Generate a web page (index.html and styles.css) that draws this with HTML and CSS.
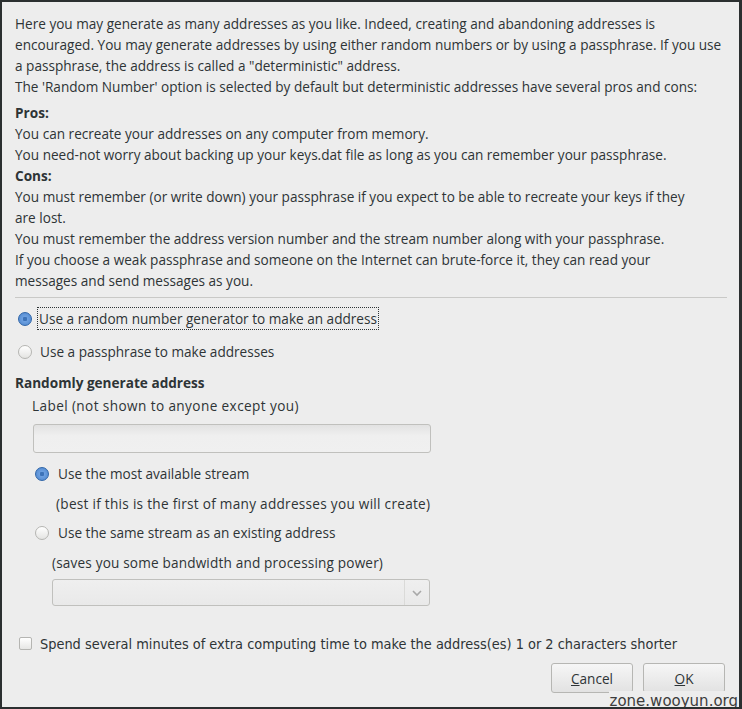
FILE: index.html
```html
<!DOCTYPE html>
<html>
<head>
<meta charset="utf-8">
<link rel="stylesheet" href="styles.css">
</head>
<body>
<div class="window">
  <div class="intro">
    <p class="line">Here you may generate as many addresses as you like. Indeed, creating and abandoning addresses is</p>
    <p class="line">encouraged. You may generate addresses by using either random numbers or by using a passphrase. If you use</p>
    <p class="line">a passphrase, the address is called a "deterministic" address.</p>
    <p class="line">The 'Random Number' option is selected by default but deterministic addresses have several pros and cons:</p>
    <p class="line bold gap">Pros:</p>
    <p class="line">You can recreate your addresses on any computer from memory.</p>
    <p class="line">You need-not worry about backing up your keys.dat file as long as you can remember your passphrase.</p>
    <p class="line bold">Cons:</p>
    <p class="line">You must remember (or write down) your passphrase if you expect to be able to recreate your keys if they</p>
    <p class="line">are lost.</p>
    <p class="line">You must remember the address version number and the stream number along with your passphrase.</p>
    <p class="line">If you choose a weak passphrase and someone on the Internet can brute-force it, they can read your</p>
    <p class="line">messages and send messages as you.</p>
  </div>
  <div class="sep"></div>
  <div class="mode">
    <div class="option">
      <span class="radio checked"></span>
      <span class="focus">Use a random number generator to make an address</span>
    </div>
    <div class="option">
      <span class="radio"></span>
      <span>Use a passphrase to make addresses</span>
    </div>
  </div>
  <div class="group">
    <div class="group-title">Randomly generate address</div>
    <div class="group-body">
      <div class="label-line">Label (not shown to anyone except you)</div>
      <div class="input"></div>
      <div class="option sub first">
        <span class="radio checked"></span>
        <span>Use the most available stream</span>
      </div>
      <div class="note note-a">(best if this is the first of many addresses you will create)</div>
      <div class="option sub">
        <span class="radio"></span>
        <span>Use the same stream as an existing address</span>
      </div>
      <div class="note note-b">(saves you some bandwidth and processing power)</div>
      <div class="combo">
        <span class="combo-field"></span>
        <span class="combo-btn">
          <svg width="12" height="8" viewBox="0 0 12 8"><path d="M2 2 L6 6 L10 2" fill="none" stroke="#a8a8a8" stroke-width="1.6"/></svg>
        </span>
      </div>
    </div>
  </div>
  <div class="check-row">
    <span class="checkbox"></span>
    <span class="check-text">Spend several minutes of extra computing time to make the address(es) 1 or 2 characters shorter</span>
  </div>
  <div class="buttons">
    <button class="btn"><u>C</u>ancel</button>
    <button class="btn"><u>O</u>K</button>
  </div>
  <div class="watermark">zone.wooyun.org</div>
</div>
</body>
</html>
```

FILE: styles.css
```css
html, body {
  margin: 0;
  padding: 0;
  background: #2b2f30;
}
.window {
  position: relative;
  box-sizing: border-box;
  width: 742px;
  height: 709px;
  border: 2px solid #2b2f30;
  border-right-width: 3px;
  background: #ededed;
  color: #2e3436;
  font-family: "Open Sans", "DejaVu Sans", sans-serif;
  font-size: 13.6px;
  padding: 0 12px 0 13px;
  overflow: hidden;
}
.intro {
  margin-top: 11px;
}
.line {
  margin: 0;
  height: 21px;
  line-height: 21px;
  white-space: nowrap;
}
.bold { font-weight: 700; }
.gap { margin-top: 5px; }
.sep {
  height: 1px;
  background: #c9c9c7;
  margin-top: 6px;
}
.mode {
  margin-top: 4px;
}
.option {
  display: flex;
  align-items: center;
  height: 33px;
  padding-left: 3px;
}
.radio {
  box-sizing: border-box;
  width: 14px;
  height: 14px;
  border-radius: 50%;
  border: 1px solid #b5b5b2;
  background: linear-gradient(#ffffff, #e4e4e2);
  margin-right: 8px;
  flex: none;
}
.radio.checked {
  border: 1px solid #2f65a8;
  background: radial-gradient(circle at 50% 50%, #3d73b8 0 2px, #6da0e0 2.5px, #4b84cc 100%);
}
.focus {
  outline: 1px dotted #2e3436;
  outline-offset: 0;
  padding: 1px 1px 1px 1px;
  margin-left: -2px;
  line-height: 19px;
}
.group-title {
  font-weight: 700;
  height: 21px;
  line-height: 21px;
  margin-top: 4px;
}
.group-body {
  padding-left: 17px;
}
.label-line {
  height: 21px;
  line-height: 21px;
  margin-top: 2px;
  letter-spacing: 0.4px;
}
.input {
  box-sizing: border-box;
  width: 398px;
  height: 29px;
  margin-top: 8px;
  margin-left: 1px;
  border: 1px solid #c0c0bd;
  border-radius: 3px;
  background: linear-gradient(#e2e2e2, #efefef 40%, #f0f0f0);
}
.option.sub {
  height: 21px;
  padding-left: 3px;
}
.option.sub .radio { margin-right: 9px; }
.option.sub.first { margin-top: 10px; }
.note {
  height: 21px;
  line-height: 21px;
}
.note-a { margin: 9px 0 8px 24px; letter-spacing: 0.28px; }
.note-b { margin: 9px 0 0 20px; letter-spacing: 0.17px; }
.combo {
  box-sizing: border-box;
  display: flex;
  width: 378px;
  height: 27px;
  margin: 6px 0 0 20px;
  border: 1px solid #c0c0bd;
  border-radius: 3px;
  background: linear-gradient(#efefef, #e9e9e9);
}
.combo-field { flex: 1; }
.combo-btn {
  width: 24px;
  border-left: 1px solid #dadad8;
  display: flex;
  align-items: center;
  justify-content: center;
}
.check-row {
  display: flex;
  align-items: center;
  height: 21px;
  margin-top: 27px;
  padding-left: 4px;
}
.check-text {
  font-family: "DejaVu Sans Condensed", "DejaVu Sans", sans-serif;
  font-stretch: condensed;
  font-size: 14.4px;
}
.checkbox {
  box-sizing: border-box;
  width: 13px;
  height: 13px;
  border: 1px solid #b5b5b2;
  border-radius: 2px;
  background: linear-gradient(#ffffff, #e6e6e4);
  margin-right: 8px;
  flex: none;
}
.buttons {
  display: flex;
  justify-content: flex-end;
  gap: 10px;
  margin-top: 9px;
  padding-right: 2px;
}
.btn {
  box-sizing: border-box;
  width: 82px;
  height: 30px;
  border: 1px solid #b6b6b3;
  border-radius: 3px;
  background: linear-gradient(#f6f6f6, #e2e2e2);
  color: #2e3436;
  font-family: inherit;
  font-size: 13.6px;
  padding: 0;
}
.watermark {
  position: absolute;
  right: 0;
  bottom: -4px;
  font-family: "DejaVu Sans", sans-serif;
  font-size: 15px;
  color: #3c3c3c;
  background: #ededed;
  padding: 0 1px;
  line-height: 20px;
}
```
